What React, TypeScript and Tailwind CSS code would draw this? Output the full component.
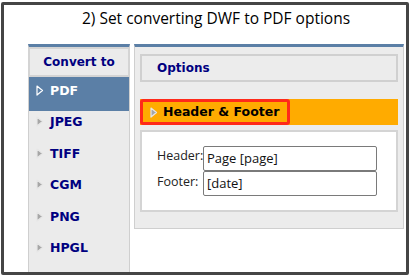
const navItems = ['PDF', 'JPEG', 'TIFF', 'CGM', 'PNG', 'HPGL'];

const Arrow = ({ active }: { active?: boolean }) => (
  <svg width="8" height="11" viewBox="0 0 8 11" className="shrink-0">
    <polygon
      points="1,1 6.5,5.5 1,10"
      fill={active ? '#5b7fa6' : '#a6a6a6'}
      stroke={active ? '#ffffff' : '#e6e6e6'}
      strokeWidth="1.2"
      strokeLinejoin="round"
    />
  </svg>
);

export default function App() {
  return (
    <div className="w-[411px] h-[276px] bg-white pl-[1px] pt-[2px]">
      <div className="w-[408px] h-[273px] border-[3px] border-[#454545] rounded-[2px] flex flex-col">
        {/* Title */}
        <div className="h-[39px] pt-[2px] pl-[22px] text-center text-black text-[15.5px] leading-[22px] font-['Open_Sans',sans-serif]">
          2) Set converting DWF to PDF options
        </div>

        <div className="flex-1 flex items-start pl-[24px] gap-[4px] font-['DejaVu_Sans',sans-serif]">
          {/* Left nav */}
          <div className="w-[102px] self-stretch bg-[#ebebeb] border-t-[3px] border-t-[#5b7fa6] border-x border-x-[#cfcfcf]">
            <div className="h-[30px] border-2 border-[#d4d4d4] -mx-px flex items-center justify-center text-[12px] font-bold text-[#000080]">
              Convert to
            </div>
            {navItems.map((item, i) =>
              i === 0 ? (
                <div
                  key={item}
                  className="h-[34px] bg-[#5b7fa6] flex items-start pt-[6px] pl-[7px] gap-[6px] text-[12.5px] leading-[16px] font-bold text-white"
                >
                  <span className="pt-[2px]">
                    <Arrow active />
                  </span>
                  {item}
                </div>
              ) : (
                <div
                  key={item}
                  className="h-[31.5px] flex items-start pt-[3px] pl-[7px] gap-[6px] text-[12.5px] leading-[16px] font-bold text-[#000080]"
                >
                  <span className="pt-[2px]">
                    <Arrow />
                  </span>
                  {item}
                </div>
              )
            )}
          </div>

          {/* Options panel */}
          <div className="w-[270px] bg-[#ececec] border-t-[3px] border-t-[#5b7fa6] border-x border-b border-x-[#cfcfcf] border-b-[#cfcfcf] px-[5px] pt-[7px] pb-[16px]">
            <div className="h-[28px] border-2 border-[#d0d0d0] flex items-center pl-[15px] text-[12px] font-bold text-[#000080]">
              Options
            </div>

            <div className="mt-[17px] h-[26px] bg-[#ffab00] flex">
              <div className="w-[150px] h-full border-[3px] border-[#ff2a1a] rounded-[3px] flex items-center pl-[7px] gap-[5px]">
                <Arrow />
                <span className="text-[12.5px] font-bold text-black">Header &amp; Footer</span>
              </div>
            </div>

            <div className="mt-[5px] h-[82px] bg-white border-2 border-[#d4d4d4] pt-[14px] pl-[15px] font-['Open_Sans',sans-serif] text-[12.5px]">
              <div className="flex">
                <div className="w-[46px] flex flex-col text-[#222] whitespace-nowrap">
                  <span className="h-[25px] leading-[20px]">Header:</span>
                  <span className="h-[25px] leading-[22px]">Footer:</span>
                </div>
                <div className="w-[174px] flex flex-col text-[13px]">
                  <div className="h-[25px] border border-[#7a7a7a] rounded-[2px] pl-[3px] leading-[23px] text-[#111]">
                    Page [page]
                  </div>
                  <div className="h-[25px] border border-[#7a7a7a] rounded-[2px] pl-[3px] leading-[23px] text-[#111]">
                    [date]
                  </div>
                </div>
              </div>
            </div>
          </div>
        </div>
      </div>
    </div>
  );
}
